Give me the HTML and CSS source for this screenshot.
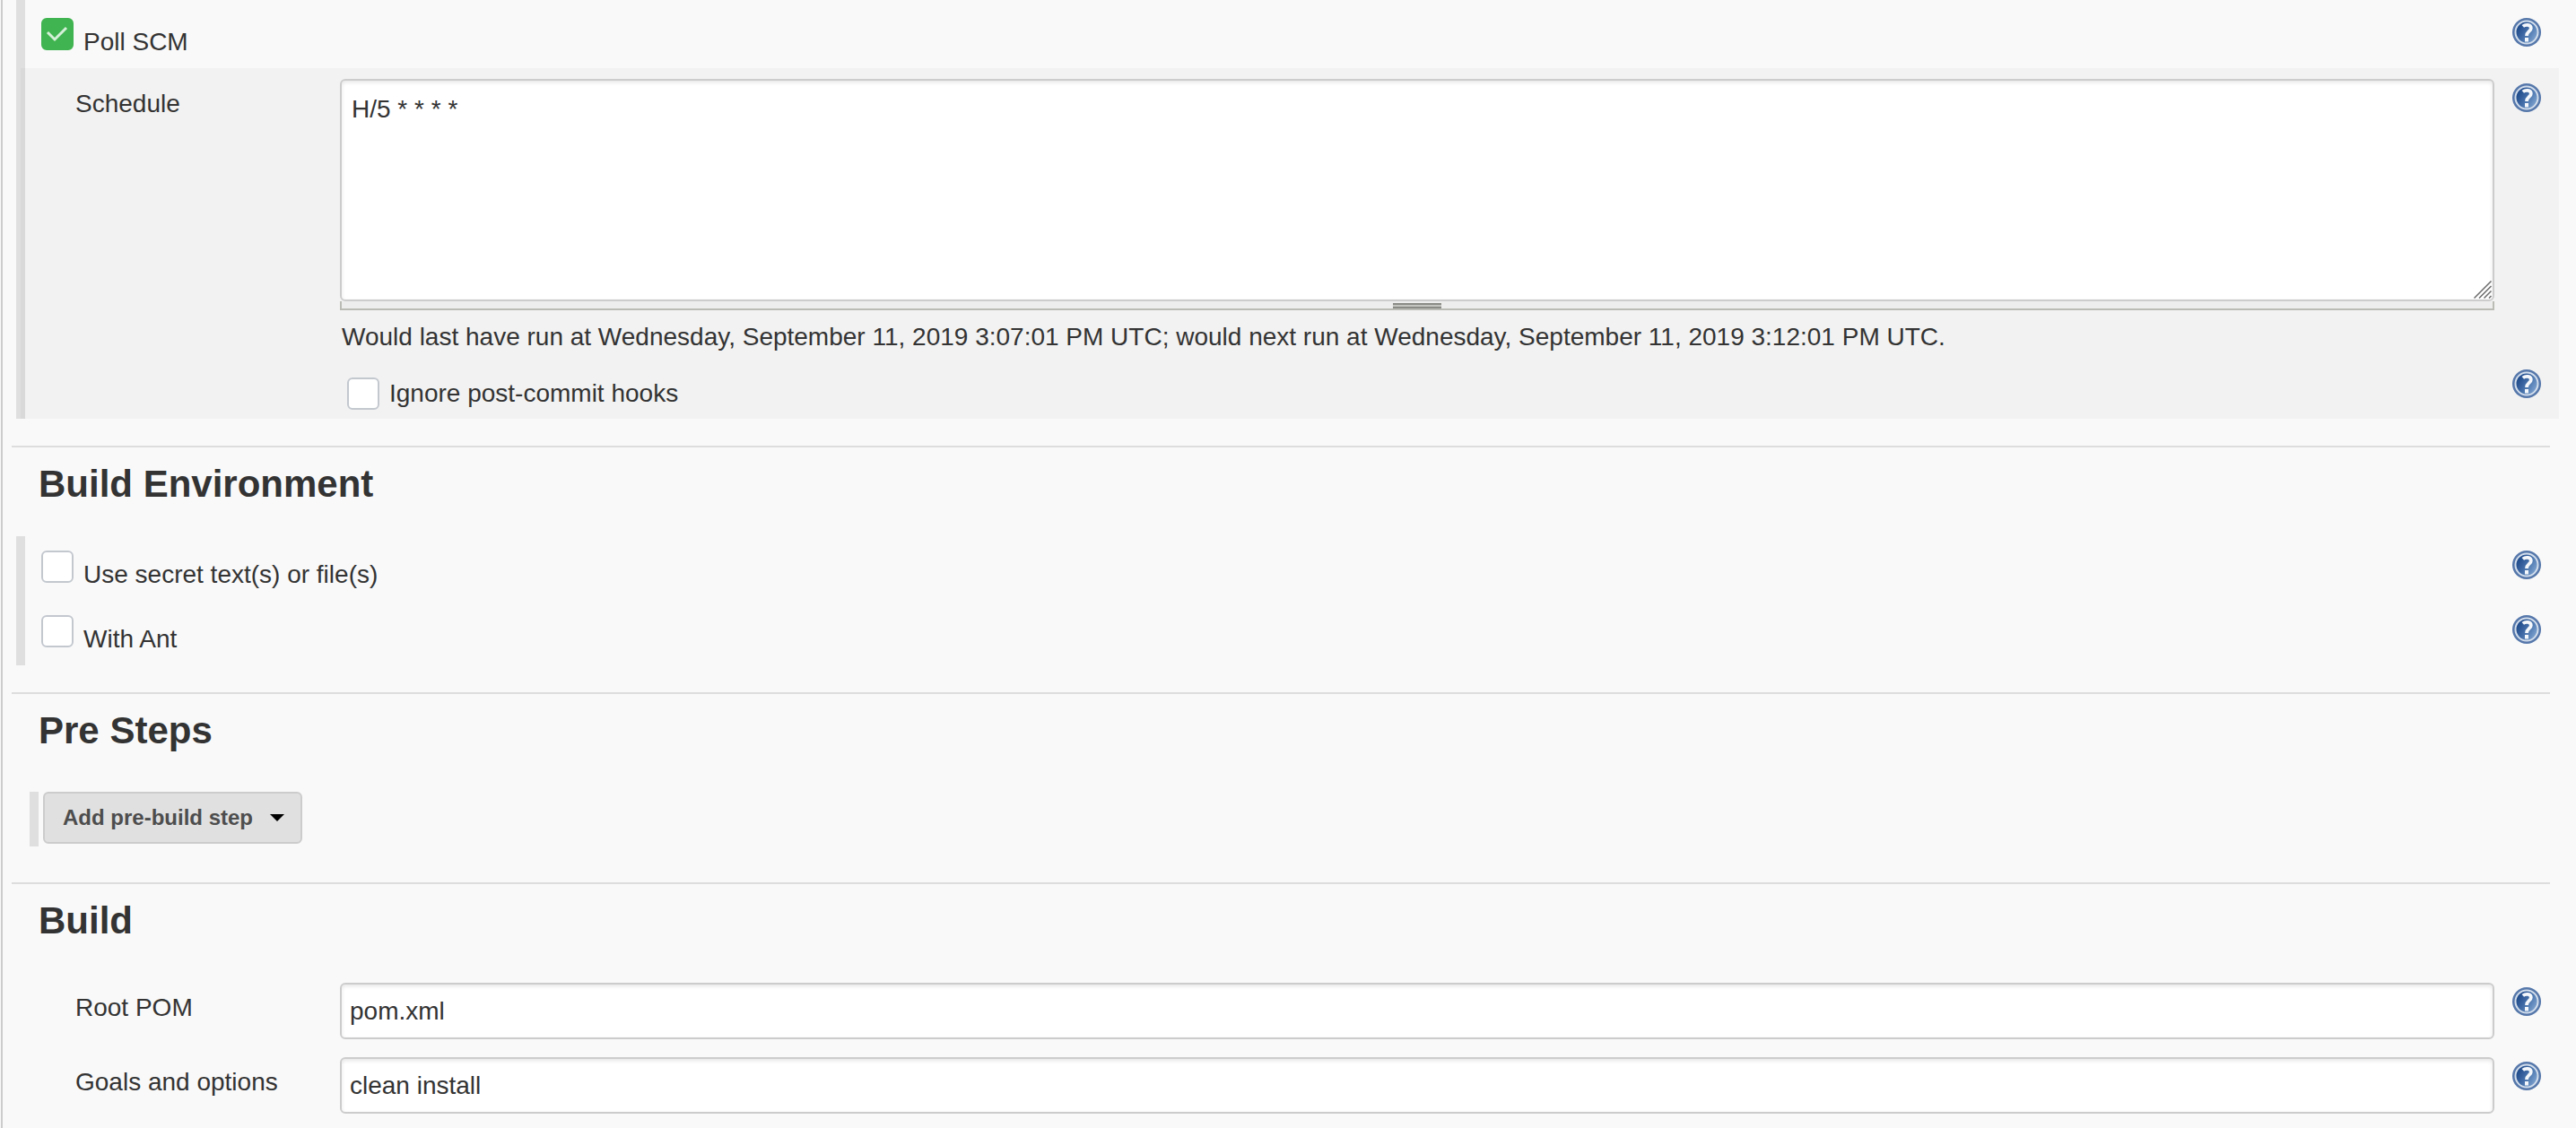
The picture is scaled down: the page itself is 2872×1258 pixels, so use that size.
FILE: index.html
```html
<!DOCTYPE html>
<html lang="en">
<head>
<meta charset="utf-8">
<meta name="viewport" content="width=device-width, initial-scale=1">
<title>Job configuration</title>
<link rel="stylesheet" href="styles.css">
</head>
<body>
<svg class="sprite" aria-hidden="true">
  <defs>
    <linearGradient id="disc" x1="0" y1="0.2" x2="1" y2="0.8">
      <stop offset="0.1" stop-color="#1f4a8a"/>
      <stop offset="0.5" stop-color="#446fa9"/>
      <stop offset="1" stop-color="#86aad4"/>
    </linearGradient>
    <symbol id="help" viewBox="0 0 32 32">
      <circle cx="16" cy="16" r="16" fill="#5577aa"/>
      <circle cx="16" cy="16" r="12.500" fill="url(#disc)" stroke="#d3deec" stroke-width="2"/>
      <path d="M11.800 9.400C14.500 7 20.800 7.200 20.800 11.400C20.800 15 16 15 16 20" fill="none" stroke="#f4f7fb" stroke-width="3.800"/>
      <rect x="14" y="22" width="4" height="4.500" fill="#f4f7fb"/>
    </symbol>
  </defs>
</svg>
<main class="config">
  <form>
    <section>
      <div class="block block-first">
        <div class="toggle-row">
          <label class="toggle"><input type="checkbox" checked><span>Poll SCM</span></label>
          <a class="help" href="#" aria-label="Help for Poll SCM"><svg><use href="#help"/></svg></a>
        </div>
        <div class="nested">
          <div class="field-row">
            <label class="field-label" for="schedule">Schedule</label>
            <div class="field">
              <div class="textarea-box">
                <textarea id="schedule" spellcheck="false">H/5 * * * *</textarea>
                <svg class="resizer" viewBox="0 0 20 20" aria-hidden="true"><path d="M0.500 19.500L19.500 0.500M6 19.500L19.500 6M11.500 19.500L19.500 11.500M17 19.500L19.500 17"/></svg>
              </div>
              <div class="drag-bar"><span class="grip"></span></div>
              <p class="status">Would last have run at Wednesday, September 11, 2019 3:07:01 PM UTC; would next run at Wednesday, September 11, 2019 3:12:01 PM UTC.</p>
            </div>
            <a class="help" href="#" aria-label="Help for Schedule"><svg><use href="#help"/></svg></a>
          </div>
          <div class="option-row">
            <label class="option"><input type="checkbox"><span>Ignore post-commit hooks</span></label>
            <a class="help" href="#" aria-label="Help for Ignore post-commit hooks"><svg><use href="#help"/></svg></a>
          </div>
        </div>
      </div>
    </section>

    <section>
      <h2>Build Environment</h2>
      <div class="block">
        <div class="toggle-row">
          <label class="toggle"><input type="checkbox"><span>Use secret text(s) or file(s)</span></label>
          <a class="help" href="#" aria-label="Help for secret texts or files"><svg><use href="#help"/></svg></a>
        </div>
        <div class="toggle-row">
          <label class="toggle"><input type="checkbox"><span>With Ant</span></label>
          <a class="help" href="#" aria-label="Help for With Ant"><svg><use href="#help"/></svg></a>
        </div>
      </div>
    </section>

    <section>
      <h2>Pre Steps</h2>
      <div class="steps">
        <button type="button" class="menu-button">Add pre-build step<svg class="caret" viewBox="0 0 16 8" aria-hidden="true"><path d="M0 0H16L8 8Z"/></svg></button>
      </div>
    </section>

    <section>
      <h2>Build</h2>
      <div class="block block-plain">
        <div class="field-row spaced">
          <label class="field-label" for="pom">Root POM</label>
          <input class="field" type="text" id="pom" value="pom.xml">
          <a class="help" href="#" aria-label="Help for Root POM"><svg><use href="#help"/></svg></a>
        </div>
        <div class="field-row spaced">
          <label class="field-label" for="goals">Goals and options</label>
          <input class="field" type="text" id="goals" value="clean install" spellcheck="false">
          <a class="help" href="#" aria-label="Help for Goals and options"><svg><use href="#help"/></svg></a>
        </div>
      </div>
    </section>
  </form>
</main>
</body>
</html>
```
FILE: styles.css
```css
* {
  box-sizing: border-box;
}

body {
  margin: 0;
  background: #f9f9f9;
  color: #333;
  font: 28px/36px "Liberation Sans", Arial, sans-serif;
}

input,
textarea,
button {
  margin: 0;
  font: inherit;
  color: inherit;
}

.sprite {
  position: absolute;
  width: 0;
  height: 0;
}

.config {
  min-height: 100vh;
  margin-left: 1px;
  padding: 0 29px 0 10px;
  border-left: 2px solid #ccc;
}

h2 {
  margin: 0;
  padding: 17px 30px 34px;
  border-top: 2px solid #ddd;
  font-size: 42px;
  line-height: 48px;
}

/* Groups of settings, marked by a bar at their left */
.block {
  margin: 0 -10px 30px 5px;
  border-left: 10px solid #dfdfdf;
}

.block-first {
  padding-top: 4px;
}

.block-plain {
  margin-bottom: 0;
  border-left-color: transparent;
}

.toggle-row {
  display: flex;
  justify-content: space-between;
  align-items: flex-start;
  height: 72px;
  padding: 16px 20px 0 18px;
}

.toggle {
  display: flex;
  align-items: baseline;
  gap: 11px;
}

input[type="checkbox"] {
  appearance: none;
  flex: none;
  width: 36px;
  height: 36px;
  border: 2px solid #c3c8cf;
  border-radius: 6px;
  background: #fff;
}

input[type="checkbox"]:checked {
  border-color: #40b450;
  background: #40b450 url("data:image/svg+xml,%3Csvg xmlns='http://www.w3.org/2000/svg' viewBox='0 0 32 32'%3E%3Cpath d='M5 14L13 22L26 9' fill='none' stroke='%23d5f0d8' stroke-width='3'/%3E%3C/svg%3E") center / 32px 32px no-repeat;
}

.help {
  display: block;
  flex: none;
  width: 32px;
  height: 32px;
}

.help svg {
  display: block;
  width: 100%;
  height: 100%;
}

.nested {
  margin-left: -5px;
  padding: 12px 0 10px;
  border-left: 5px solid #d9d9d9;
  background: #f2f2f2;
}

.field-row {
  display: grid;
  grid-template-columns: 331px 1fr 32px;
  column-gap: 20px;
  align-items: start;
  padding-right: 20px;
}

.spaced {
  padding-top: 11px;
  padding-bottom: 9px;
}

.field-label {
  padding: 10px 0 0 56px;
}

.field-row .help {
  margin-top: 5px;
}

.textarea-box {
  position: relative;
}

textarea,
input[type="text"] {
  display: block;
  width: 100%;
  border: 2px solid #ccc;
  border-radius: 6px;
  background: #fff;
  box-shadow: inset 0 2px 4px rgba(0, 0, 0, 0.1);
}

textarea {
  height: 248px;
  padding: 14px 11px;
  resize: none;
}

input[type="text"] {
  height: 63px;
  padding: 0 9px;
}

.resizer {
  position: absolute;
  right: 3px;
  bottom: 3px;
  width: 20px;
  height: 20px;
  fill: none;
  stroke: #6b6b6b;
  stroke-width: 1.5;
}

.drag-bar {
  display: flex;
  justify-content: center;
  align-items: flex-end;
  height: 10px;
  border: solid #bbbbb5;
  border-width: 0 2px 2px;
  background: #ededed;
}

.grip {
  width: 54px;
  height: 6px;
  border: solid #8a8a86;
  border-width: 2px 0;
  background: #c4c4c0;
}

.status {
  margin: 12px 0 0;
  padding-left: 2px;
}

.option-row {
  display: flex;
  justify-content: space-between;
  align-items: flex-start;
  padding: 18px 20px 0 359px;
}

.option {
  display: flex;
  gap: 11px;
  padding-top: 9px;
}

.steps {
  display: flex;
  align-items: flex-start;
  height: 61px;
  margin: 10px 0 40px 20px;
  padding-left: 5px;
  border-left: 10px solid #dfdfdf;
}

.menu-button {
  display: flex;
  align-items: center;
  gap: 19px;
  height: 58px;
  padding: 0 18px 0 20px;
  border: 2px solid #ccc;
  border-radius: 6px;
  background: #e0e0e0;
  color: #4d4d4d;
  font-size: 24px;
  font-weight: bold;
}

.caret {
  width: 16px;
  height: 8px;
}
```
